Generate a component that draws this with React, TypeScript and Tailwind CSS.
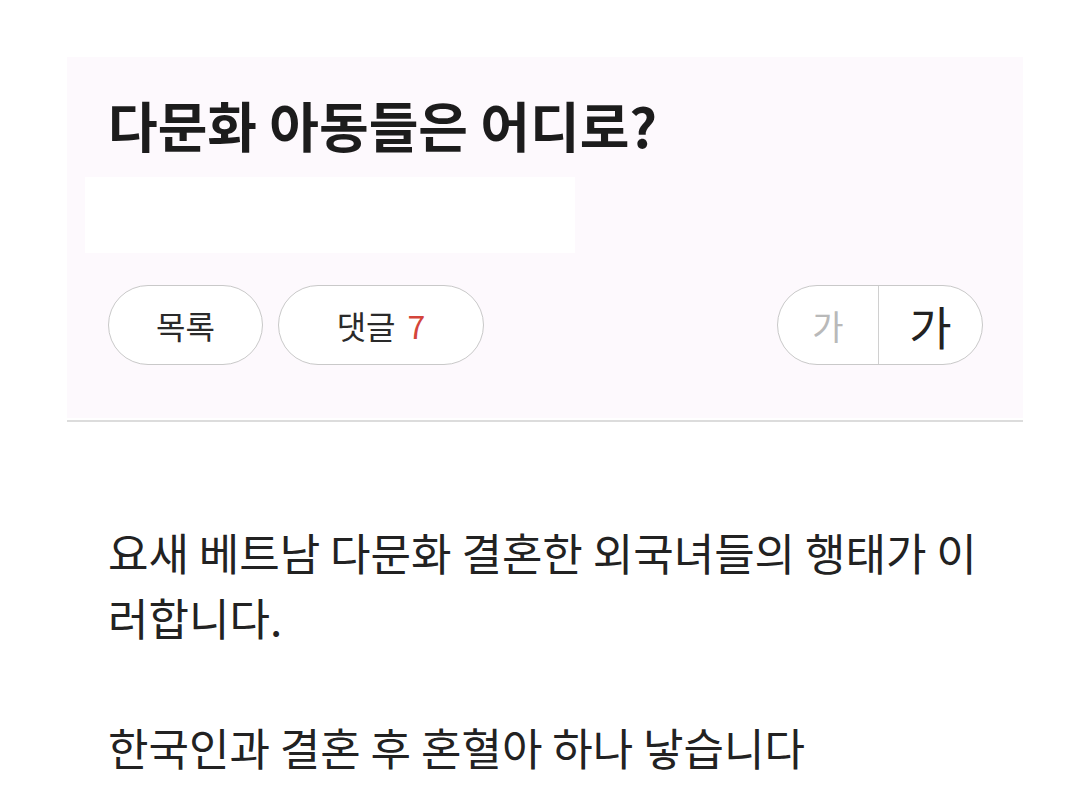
import React from "react";

const font = { fontFamily: '"Noto Sans CJK KR", "Noto Sans", sans-serif' };

export default function App() {
  return (
    <div
      className="w-[1080px] h-[800px] bg-white overflow-hidden"
      style={font}
    >
      <div className="pt-[57px] pl-[67px] w-[1023px]">
        <div className="h-[361px] bg-[#fdf9fd] pl-[41px] pr-[40px] pt-[93px] relative">
          <h1 className="absolute left-[41px] top-[36px] text-[54px] leading-[64px] font-bold text-[#1c1c1c]">
            다문화 아동들은 어디로?
          </h1>
          <div className="ml-[-23px] mt-[27px] w-[490px] h-[76px] bg-white" />
          <div className="mt-[32px] flex items-center">
            <button className="w-[155px] h-[80px] rounded-full border-[1.5px] border-[#c9c9c9] bg-white text-[32px] text-[#2a2a2a] flex items-center justify-center">
              목록
            </button>
            <button className="ml-[15px] w-[206px] h-[80px] rounded-full border-[1.5px] border-[#c9c9c9] bg-white text-[32px] text-[#2a2a2a] flex items-center justify-center gap-[12px]">
              <span>댓글</span>
              <span className="text-[#d4453a]">7</span>
            </button>
            <div className="ml-auto w-[206px] h-[80px] rounded-full border-[1.5px] border-[#c9c9c9] bg-white flex items-stretch overflow-hidden">
              <div className="w-[101px] flex items-center justify-center text-[34px] text-[#b9b9b9] border-r-[1.5px] border-[#d0d0d0]">
                가
              </div>
              <div className="flex-1 flex items-center justify-center text-[46px] text-[#222]">
                가
              </div>
            </div>
          </div>
        </div>
        <div className="mt-[2px] h-[2px] bg-[#dcdcdc]" />
      </div>
      <div className="pl-[108px] pr-[70px] pt-[98px] text-[44px] leading-[65px] text-[#222]">
        <p>요새 베트남 다문화 결혼한 외국녀들의 행태가 이러합니다.</p>
        <p className="mt-[65px]">한국인과 결혼 후 혼혈아 하나 낳습니다</p>
      </div>
    </div>
  );
}
